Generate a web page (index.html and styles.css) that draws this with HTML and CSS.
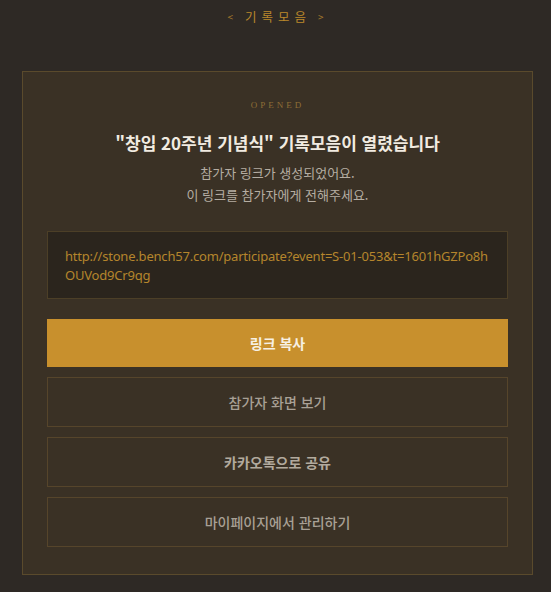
FILE: index.html
```html
<!DOCTYPE html>
<html lang="ko">
<head>
<meta charset="utf-8">
<title>기록모음</title>
<link rel="stylesheet" href="styles.css">
</head>
<body>
<header class="top">
  <span class="arrow">&lt;</span>
  <span class="top-title">기록모음</span>
  <span class="arrow">&gt;</span>
</header>
<main class="card">
  <div class="status">OPENED</div>
  <h1 class="title">"창입 20주년 기념식" 기록모음이 열렸습니다</h1>
  <p class="desc">참가자 링크가 생성되었어요.<br>이 링크를 참가자에게 전해주세요.</p>
  <div class="link-box">http://stone.bench57.com/participate?event=S-01-053&amp;t=1601hGZPo8hOUVod9Cr9qg</div>
  <div class="actions">
    <button class="btn btn-primary">링크 복사</button>
    <button class="btn btn-outline">참가자 화면 보기</button>
    <button class="btn btn-outline btn-strong">카카오톡으로 공유</button>
    <button class="btn btn-outline">마이페이지에서 관리하기</button>
  </div>
</main>
</body>
</html>
```

FILE: styles.css
```css
html, body {
  margin: 0;
  padding: 0;
}
body {
  background: #2e2925;
  font-family: "Noto Sans CJK KR", "Noto Sans", sans-serif;
  min-height: 592px;
}
.top {
  display: flex;
  justify-content: center;
  align-items: center;
  gap: 12px;
  padding-top: 8px;
  height: 18px;
  line-height: 18px;
  color: #bb882b;
  font-size: 12.5px;
}
.top .arrow {
  font-size: 10px;
  color: #a67a2c;
}
.top-title {
  letter-spacing: 5px;
  margin-right: -5px;
}
.card {
  margin: 45px 18px 0 22px;
  border: 1px solid #5a4a2c;
  background: #3a3125;
  padding: 27px 24px 27px 24px;
  display: flex;
  flex-direction: column;
  align-items: stretch;
}
.status {
  text-align: center;
  font-family: "Liberation Serif", "DejaVu Serif", serif;
  font-size: 9px;
  line-height: 12px;
  letter-spacing: 3px;
  color: #8e6e36;
}
.title {
  margin: 20px 0 0;
  text-align: center;
  font-size: 17px;
  line-height: 24px;
  font-weight: 700;
  color: #f1ebe1;
}
.desc {
  margin: 7px 0 0;
  text-align: center;
  font-size: 13px;
  line-height: 22px;
  color: #b5ada2;
}
.link-box {
  margin-top: 25px;
  border: 1px solid #4c3f27;
  background: #2b251d;
  padding: 15px 17px 13px;
  font-family: "Noto Sans", sans-serif;
  font-size: 13px;
  letter-spacing: -0.2px;
  line-height: 19px;
  color: #b5852c;
  word-break: break-all;
}
.actions {
  margin-top: 20px;
  display: flex;
  flex-direction: column;
  gap: 10px;
}
.btn {
  display: block;
  width: 100%;
  margin: 0;
  font-family: "Noto Sans CJK KR", "Noto Sans", sans-serif;
  font-size: 14px;
  cursor: pointer;
}
.btn-primary {
  height: 48px;
  border: none;
  background: #c8902d;
  color: #f7f0e4;
  font-weight: 700;
}
.btn-outline {
  height: 50px;
  border: 1px solid #56452b;
  background: #3a3125;
  color: #a8a095;
  font-weight: 500;
}
.btn-strong {
  font-weight: 700;
  color: #b2aa9e;
}
```
